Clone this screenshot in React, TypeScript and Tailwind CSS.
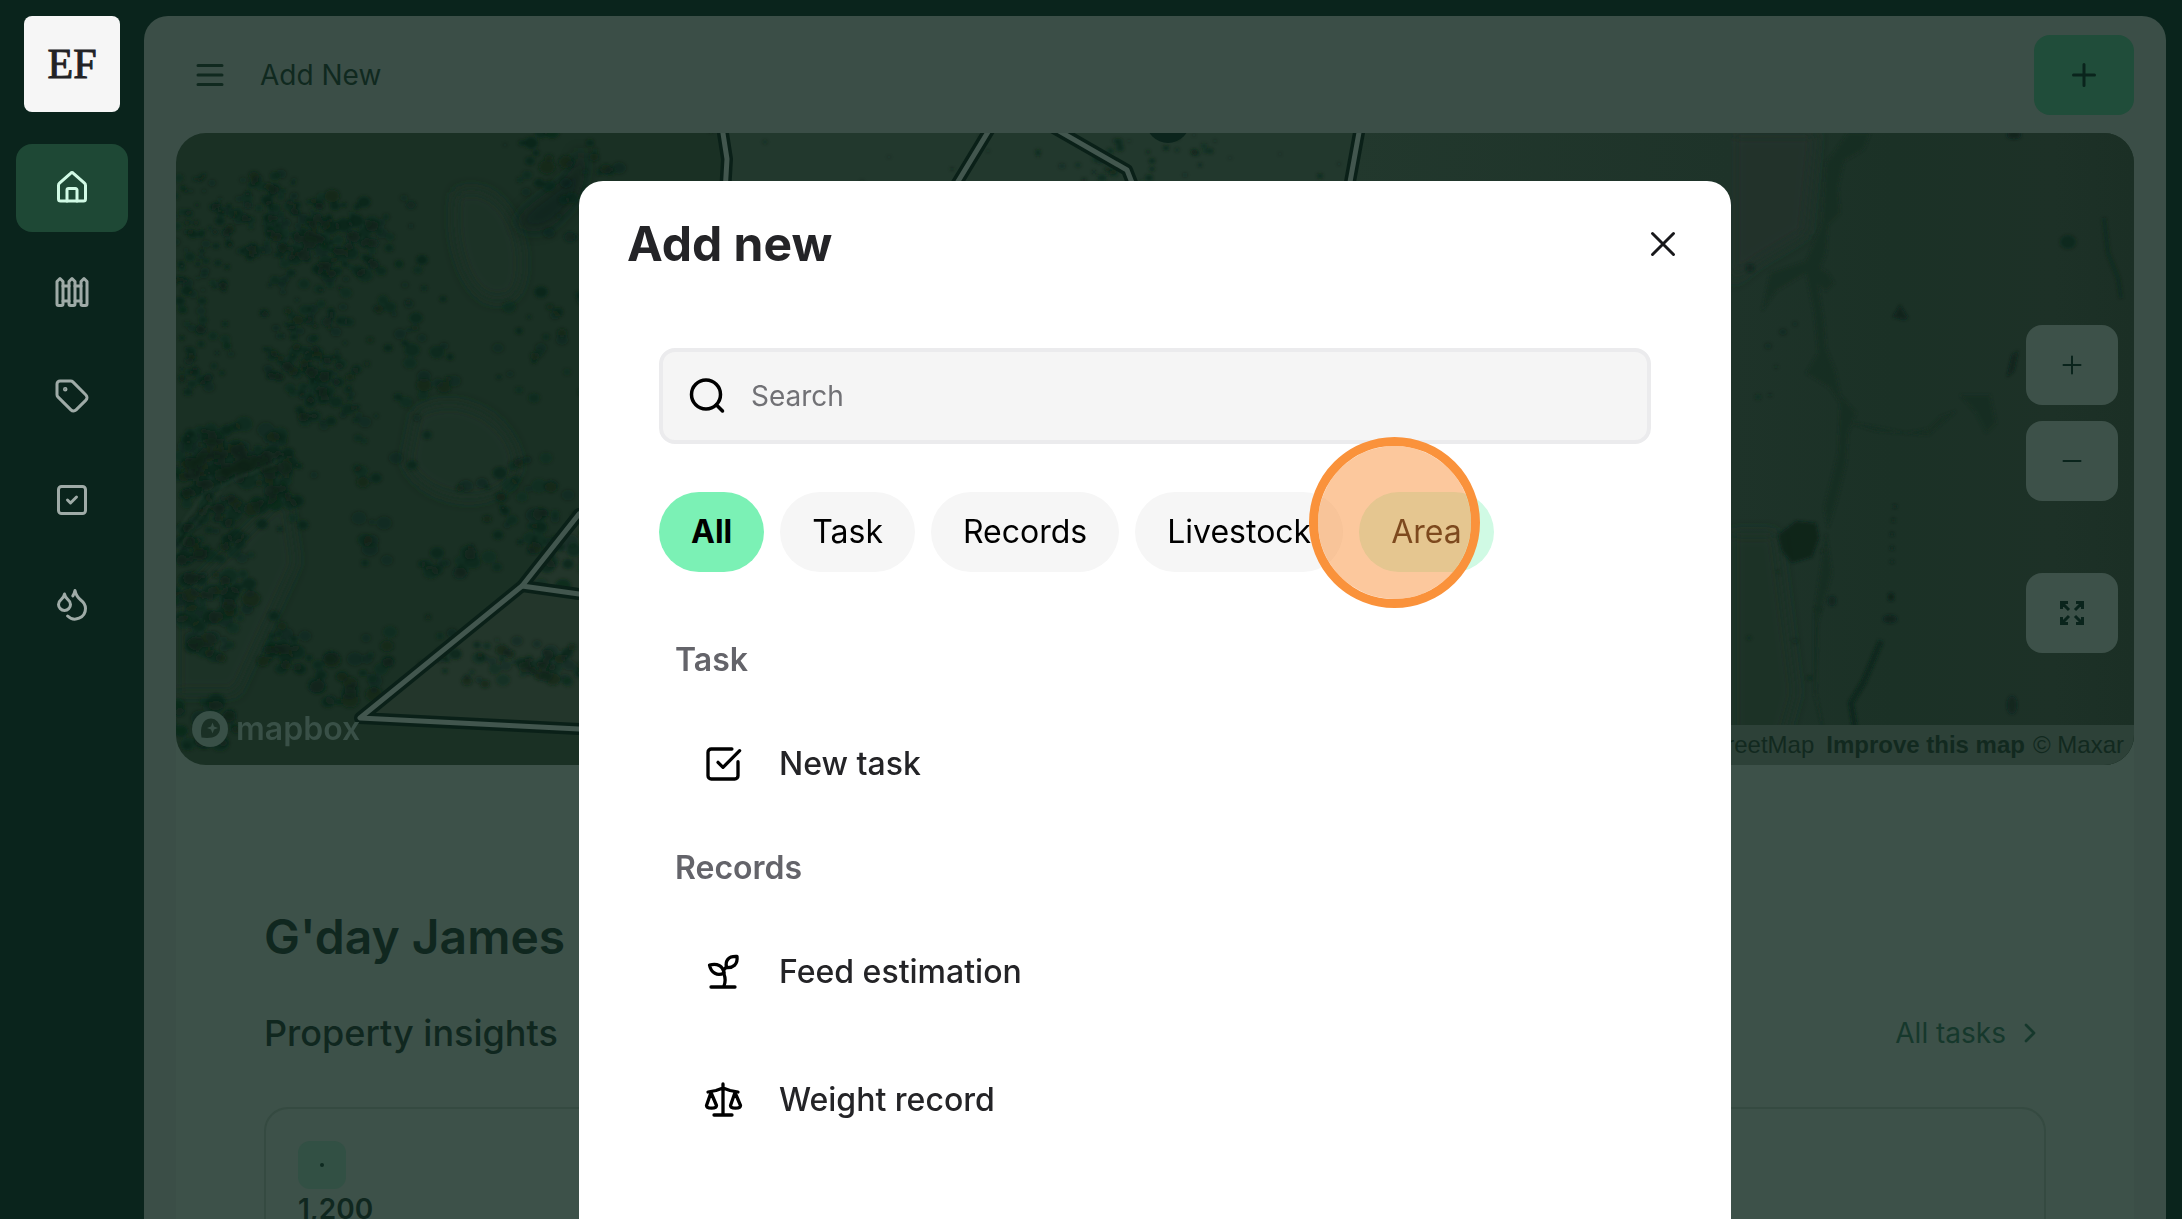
import type { ReactNode } from "react";
import { ChevronRight, Droplets, Fence, SquareCheck, SquareCheckBig, Tag } from "lucide-react";

const nextRandom = (seed: number) => {
  let s = seed;
  return () => {
    s = (s * 16807) % 2147483647;
    return s / 2147483647;
  };
};

// Wooded areas of the aerial view: centre x, centre y, spread x, spread y, trees, crown size
const woods: [number, number, number, number, number, number][] = [
  [20, 90, 35, 60, 40, 4],
  [95, 85, 60, 45, 120, 5],
  [170, 105, 60, 45, 60, 7],
  [25, 180, 35, 90, 70, 5],
  [130, 190, 45, 90, 110, 5],
  [150, 260, 40, 40, 50, 6],
  [65, 320, 55, 30, 60, 8],
  [25, 350, 30, 60, 60, 7],
  [95, 360, 50, 45, 40, 7],
  [40, 450, 45, 80, 90, 8],
  [110, 510, 30, 30, 26, 7],
  [165, 545, 45, 25, 26, 8],
  [225, 160, 50, 100, 30, 6],
  [245, 235, 40, 50, 18, 7],
  [210, 310, 50, 50, 12, 6],
  [200, 405, 40, 30, 8, 7],
  [285, 430, 40, 18, 16, 7],
  [330, 360, 50, 60, 26, 7],
  [375, 410, 40, 60, 34, 7],
  [385, 30, 60, 40, 22, 7],
  [395, 110, 60, 60, 14, 6],
  [370, 215, 60, 60, 24, 6],
  [320, 530, 60, 28, 36, 6],
  [385, 535, 40, 22, 30, 7],
  [230, 520, 60, 40, 14, 6],
  [25, 590, 40, 25, 26, 8],
  [760, 20, 500, 40, 30, 3],
  [960, 25, 80, 25, 30, 4],
  [1600, 200, 40, 80, 6, 3],
  [1620, 480, 60, 90, 8, 3],
];

const trees = (() => {
  const rand = nextRandom(7321);
  return woods.flatMap(([cx, cy, sx, sy, count, size]) =>
    Array.from({ length: count }, () => {
      const a = rand() * Math.PI * 2;
      const d = Math.pow(rand(), 0.6);
      const r = size * (0.4 + rand() * 0.8);
      return {
        x: Math.round(cx + Math.cos(a) * d * sx),
        y: Math.round(cy + Math.sin(a) * d * sy),
        r: Math.round(r * 10) / 10,
        o: Math.round((0.25 + rand() * 0.4) * 100) / 100,
      };
    }),
  );
})();

const fences = [
  "M403 381 L346 453 L184 585 L403 596",
  "M346 453 L403 461",
  "M546 -6 L551 26 L549 60",
  "M815 -6 L775 60",
  "M876 -6 L951 37 L960 60",
  "M1184 -6 L1172 60",
];

function AerialMap() {
  return (
    <svg
      className="absolute inset-0 h-full w-full"
      viewBox="0 0 1958 632"
      preserveAspectRatio="xMidYMid slice"
      aria-hidden="true"
    >
      <defs>
        <filter id="soft" x="-20%" y="-20%" width="140%" height="140%">
          <feGaussianBlur stdDeviation="1.4" />
        </filter>
        <filter id="shade" x="-50%" y="-50%" width="200%" height="200%">
          <feGaussianBlur stdDeviation="7" />
        </filter>
        <linearGradient id="pasture" x1="0" x2="1">
          <stop offset="0.62" stopColor="#22382d" />
          <stop offset="1" stopColor="#1e3329" />
        </linearGradient>
        <linearGradient id="east" x1="0" x2="1">
          <stop offset="0" stopColor="#1e3329" />
          <stop offset="0.4" stopColor="#1b3126" />
          <stop offset="0.8" stopColor="#1d3127" />
          <stop offset="1" stopColor="#1b2f25" />
        </linearGradient>
      </defs>
      <rect width="1958" height="632" fill="#1a3024" />
      <rect x="1555" width="403" height="632" fill="url(#east)" />
      <g filter="url(#shade)">
        <path d="M240 280 C290 250 350 300 340 340 C320 380 250 370 230 330Z" fill="#1d3327" />
        <path d="M280 60 C330 40 360 120 340 160 C300 190 270 120 280 60Z" fill="#1c3227" />
        <path d="M0 470 L110 360 L120 430 L60 560 L0 560Z" fill="#1e3328" />
        <path d="M1555 0 H1640 L1630 100 L1580 130 L1555 150Z" fill="#20322a" />
        <path d="M1555 400 H1600 L1620 560 L1600 632 H1555Z" fill="#1e3128" />
      </g>
      <path d="M546 0 H1555 V60 H549 L551 26Z" fill="url(#pasture)" />
      <path d="M403 381 L346 453 L184 585 L403 596Z" fill="#23362b" />
      <path
        d="M400 20 C400 50 360 60 342 85 C335 100 370 105 385 85 C400 70 410 60 410 20Z"
        fill="#0b231a"
        opacity="0.7"
        filter="url(#shade)"
      />
      <g fill="#0b2318" filter="url(#soft)">
        {trees.map((t, i) => (
          <ellipse key={i} cx={t.x} cy={t.y} rx={t.r} ry={t.r * 0.85} opacity={t.o} />
        ))}
      </g>
      <g fill="none" stroke="#2b4036" strokeWidth="2" opacity="0.5" filter="url(#soft)">
        <path d="M0 400 L28 360 L62 345 L100 330" />
        <path d="M0 420 L20 390 L50 350" />
      </g>
      {/* creek lines and dams on the eastern side */}
      <g fill="#142d21" filter="url(#soft)" opacity="0.8">
        <path d="M1694 0 L1688 16 L1668 28 L1662 55 L1664 80 L1652 92 L1650 120 L1644 135 L1652 140 L1658 150 L1650 158 L1642 152 L1648 190 L1650 215 L1660 240 L1664 262 L1680 280 L1672 300 L1670 330 L1660 370 L1652 395 L1648 375 L1662 320 L1664 270 L1654 255 L1630 240 L1642 220 L1638 180 L1630 140 L1600 158 L1586 178 L1594 140 L1630 128 L1646 90 L1650 30 L1672 0Z" />
        <path d="M1668 288 L1700 294 L1730 300 L1752 296 L1764 284 L1780 278 L1752 302 L1700 298Z" />
        <path d="M1784 262 L1814 262 L1820 290 L1810 300 L1800 280Z" />
        <path d="M1650 400 L1656 440 L1642 490 L1640 560 L1650 610 L1638 560 L1638 480Z" />
      </g>
      <g fill="#0a2119" filter="url(#soft)">
        <path d="M1602 402 L1620 388 L1640 390 L1643 405 L1636 424 L1616 430 L1606 418Z" opacity="0.9" />
        <path d="M1724 172 L1732 185 L1728 187 L1717 184Z" opacity="0.8" />
        <path d="M1836 222 L1842 218 L1838 238 L1831 244Z" opacity="0.8" />
        <ellipse cx="1892" cy="109" rx="8" ry="7" opacity="0.5" />
        <ellipse cx="1574" cy="135" rx="4" ry="4" opacity="0.7" />
        <ellipse cx="1836" cy="572" rx="5" ry="9" opacity="0.7" />
        <ellipse cx="1715" cy="464" rx="3" ry="4" />
        <ellipse cx="1656" cy="468" rx="4" ry="5" opacity="0.7" />
        <ellipse cx="1714" cy="486" rx="7" ry="4" opacity="0.8" />
        <ellipse cx="1838" cy="2" rx="7" ry="4" opacity="0.8" />
      </g>
      <g fill="none" stroke="#0d251b" filter="url(#soft)">
        <path d="M1705 508 L1688 548 L1675 570 L1679 595 L1690 632" strokeWidth="5" />
        <path d="M1928 85 L1932 120 L1942 145 L1945 165" strokeWidth="4" opacity="0.4" />
        <path d="M1719 372 L1716 400 L1716 430" strokeWidth="3" strokeDasharray="3 11" />
      </g>
      <circle cx="992" cy="-12" r="22" fill="#0b241c" />
      <g fill="none" strokeLinejoin="round" strokeLinecap="round">
        {fences.map((d) => (
          <path key={d} d={d} stroke="#0a2018" strokeWidth="12" />
        ))}
        {fences.map((d) => (
          <path key={d} d={d} stroke="#42564e" strokeWidth="5" />
        ))}
      </g>
    </svg>
  );
}

function Glyph({ children, width = 3 }: { children: ReactNode; width?: number }) {
  return (
    <svg
      className="h-10 w-10"
      viewBox="0 0 40 40"
      fill="none"
      stroke="currentColor"
      strokeWidth={width}
      strokeLinecap="round"
      strokeLinejoin="round"
      aria-hidden="true"
    >
      {children}
    </svg>
  );
}

const HomeIcon = () => (
  <Glyph>
    <path d="M6.500 17.500a3 3 0 0 1 1-2.300L18.600 5.300a2 2 0 0 1 2.800 0l11.100 9.900a3 3 0 0 1 1 2.300V31a2 2 0 0 1-2 2h-23a2 2 0 0 1-2-2Z" />
    <path d="M15 33V22a1.500 1.500 0 0 1 1.500-1.500h7A1.500 1.500 0 0 1 25 22v11" />
  </Glyph>
);

const MenuIcon = () => (
  <Glyph>
    <path d="M8 10.500h24M8 20h24M8 29.500h24" />
  </Glyph>
);

const PlusIcon = () => (
  <Glyph>
    <path d="M20 9.500v21M9.500 20h21" />
  </Glyph>
);

const SmallPlusIcon = () => (
  <Glyph width={2}>
    <path d="M20 11.500v17M11.500 20h17" />
  </Glyph>
);

const MinusIcon = () => (
  <Glyph width={2}>
    <path d="M11.500 20h17" />
  </Glyph>
);

const ExpandIcon = () => (
  <Glyph>
    <g strokeLinecap="butt" strokeLinejoin="miter">
      <path d="M16 9.500H9.500V16M9.500 9.500l7.500 7.500M24 9.500h6.500V16M30.500 9.500 23 17M16 30.500H9.500V24M9.500 30.500 17 23M24 30.500h6.500V24M30.500 30.500 23 23" />
    </g>
  </Glyph>
);

const CloseIcon = () => (
  <Glyph>
    <path d="M9.500 9.500l21 21M30.500 9.500l-21 21" />
  </Glyph>
);

const SearchIcon = () => (
  <Glyph width={3.5}>
    <circle cx="19" cy="18.500" r="14.500" />
    <path d="M29.500 29l6 6" />
  </Glyph>
);

const SproutIcon = () => (
  <Glyph width={3.3}>
    <path d="M8 35h24" />
    <path d="M21 34c1.500-4 1.500-8 0-12-1-4 0-5.500 3-7" />
    <path d="M23.500 15.500C22 9 25 4 34 4.500c1 8-4 11.500-10.500 11Z" />
    <path d="M21 21C20 13.500 14 11 6.500 13c1.500 8 8 11.500 14.500 8Z" />
  </Glyph>
);

const ScaleIcon = () => (
  <Glyph width={3.3}>
    <path d="M20 4v31M11 35h18M5 12l8-1.500 7-2.500 7 2.500 8 1.500" />
    <path d="M8 12.500 3.500 25.500c0 3.500 10 3.500 10 0ZM32 12.500l-4.500 13c0 3.500 10 3.500 10 0Z" />
  </Glyph>
);

const navItems: { label: string; icon: ReactNode; active?: boolean }[] = [
  { label: "Home", icon: <HomeIcon />, active: true },
  { label: "Paddocks", icon: <Fence size={36} /> },
  { label: "Livestock", icon: <Tag size={36} /> },
  { label: "Tasks", icon: <SquareCheck size={36} /> },
  { label: "Water", icon: <Droplets size={36} /> },
];

function Sidebar() {
  return (
    <aside className="flex w-36 shrink-0 flex-col items-center pt-4">
      <a
        href="#"
        className="flex h-24 w-24 items-center justify-center rounded-lg bg-[#f6f6f6] font-['Liberation_Serif',serif] text-[42px] leading-none text-[#222225] [-webkit-text-stroke:1px_#222225]"
      >
        EF
      </a>
      <nav className="mt-8 flex w-full flex-col gap-4 px-4">
        {navItems.map((item) => (
          <a
            key={item.label}
            href="#"
            aria-label={item.label}
            className={
              item.active
                ? "flex h-22 items-center justify-center rounded-2xl bg-[#1e4835] text-[#d1fae5]"
                : "flex h-22 items-center justify-center rounded-2xl text-[#9faba7]"
            }
          >
            {item.icon}
          </a>
        ))}
      </nav>
    </aside>
  );
}

const mapButton =
  "flex h-20 w-23 items-center justify-center rounded-2xl bg-[#3d5149] text-[#0a241c]";

function MapCard() {
  return (
    <section aria-label="Property map" className="relative h-[632px] overflow-hidden rounded-[30px]">
      <AerialMap />
      <div className="absolute top-48 right-4 flex flex-col">
        <button type="button" aria-label="Zoom in" className={mapButton}>
          <SmallPlusIcon />
        </button>
        <button type="button" aria-label="Zoom out" className={`${mapButton} mt-4`}>
          <MinusIcon />
        </button>
        <button type="button" aria-label="Full screen" className={`${mapButton} mt-18`}>
          <ExpandIcon />
        </button>
      </div>
      <a
        href="#"
        aria-label="Mapbox"
        className="absolute bottom-3.5 left-4 flex items-center gap-2 text-[32px] leading-[44px] font-semibold text-[#395047]"
      >
        <svg className="h-9 w-9" viewBox="0 0 36 36" aria-hidden="true">
          <circle cx="18" cy="18" r="18" fill="#395047" />
          <path d="M9.500 26.500C8 17 10 8 19 7.500a9.500 9.500 0 0 1 9 9.500c0 9-9 11-18.500 9.500Z" fill="#1a3025" />
          <path d="M20.500 11.500l1.500 4 4 1.500-4 1.500-1.500 4-1.500-4-4-1.500 4-1.500Z" fill="#395047" />
        </svg>
        mapbox
      </a>
      <p className="absolute right-0 bottom-0 flex h-10 items-center gap-2 bg-[#2d4138] px-2.5 font-['Liberation_Sans',sans-serif] text-2xl whitespace-nowrap text-[#12291f]">
        <a href="#">© Mapbox</a>
        <a href="#">© OpenStreetMap</a>
        <a href="#" className="ml-1 font-bold">
          Improve this map
        </a>
        <span>© Maxar</span>
      </p>
    </section>
  );
}

function Dashboard() {
  return (
    <div className="flex flex-1 flex-col bg-[#3d5149] px-22 pt-[142px] text-[#10271f]">
      <h1 className="text-5xl leading-[60px] font-semibold">G'day James</h1>
      <div className="mt-9 flex items-center justify-between">
        <h2 className="text-4xl leading-[60px] font-medium">Property insights</h2>
        <a href="#" className="flex items-center gap-2 text-[28px] text-[#16382c]">
          All tasks
          <ChevronRight size={32} strokeWidth={2} />
        </a>
      </div>
      <div className="mt-11 flex-1 rounded-t-3xl border-2 border-b-0 border-[#354a41] px-8 pt-8">
        <div className="flex h-12 w-12 items-center justify-center rounded-xl bg-[#325044]">
          <span className="h-1 w-1 rounded-full bg-[#0e2a20]" />
        </div>
        <p className="text-[28px] leading-[40px] font-semibold">1,200</p>
      </div>
    </div>
  );
}

const chips: { label: string; className: string }[] = [
  { label: "All", className: "bg-[#7bf1b5] font-bold" },
  { label: "Task", className: "bg-[#f6f6f6]" },
  { label: "Records", className: "bg-[#f6f6f6]" },
  { label: "Livestock", className: "bg-[#f6f6f6]" },
  { label: "Area", className: "bg-[#d0fae4]" },
];

const groups: { title: string; items: { label: string; icon: ReactNode }[] }[] = [
  { title: "Task", items: [{ label: "New task", icon: <SquareCheckBig size={40} /> }] },
  {
    title: "Records",
    items: [
      { label: "Feed estimation", icon: <SproutIcon /> },
      { label: "Weight record", icon: <ScaleIcon /> },
    ],
  },
];

function AddNewDialog() {
  return (
    <div
      role="dialog"
      aria-labelledby="dialog-title"
      className="h-full w-full max-w-6xl overflow-hidden rounded-t-3xl bg-white"
    >
      <header className="flex h-[126px] items-center justify-between px-12">
        <h2 id="dialog-title" className="text-5xl font-bold text-[#242427]">
          Add new
        </h2>
        <button type="button" aria-label="Close" className="text-[#18181b]">
          <CloseIcon />
        </button>
      </header>
      <div className="px-20 pt-[41px]">
        <label className="flex h-24 items-center gap-6 rounded-2xl border-4 border-[#ebebed] bg-[#f5f5f5] px-6">
          <SearchIcon />
          <input
            type="search"
            aria-label="Search"
            placeholder="Search"
            className="min-w-0 flex-1 bg-transparent text-[28px] outline-none placeholder:text-[#717175]"
          />
        </label>
        <div className="mt-12 flex gap-4">
          {chips.map((chip, i) => (
            <div key={chip.label} className="relative">
              <button type="button" className={`h-20 rounded-full px-8 text-[32px] text-black ${chip.className}`}>
                {chip.label}
              </button>
              {i === chips.length - 1 && (
                <span className="pointer-events-none absolute -top-[55px] -left-[50px] h-[171px] w-[171px] rounded-full border-9 border-[#fa923b] bg-[#fa923b]/50 bg-clip-padding" />
              )}
            </div>
          ))}
        </div>
        <div className="mt-12">
          {groups.map((group) => (
            <section key={group.title}>
              <h3 className="flex h-20 items-center px-4 text-[32px] font-semibold text-[#64646a]">{group.title}</h3>
              <ul>
                {group.items.map((item) => (
                  <li key={item.label}>
                    <button
                      type="button"
                      className="flex h-32 w-full items-center gap-9 px-11 text-left text-[32px] font-medium text-[#242427]"
                    >
                      <span className="text-black">{item.icon}</span>
                      {item.label}
                    </button>
                  </li>
                ))}
              </ul>
            </section>
          ))}
        </div>
      </div>
    </div>
  );
}

export default function App() {
  return (
    <div className="flex h-screen overflow-hidden bg-[#0a241c] pr-4 font-['Inter',sans-serif]">
      <Sidebar />
      <main className="relative mt-4 flex min-w-0 flex-1 flex-col overflow-hidden rounded-t-3xl bg-[#3b4e47] px-8">
        <header className="flex h-[117px] shrink-0 items-center justify-between">
          <div className="flex items-center gap-[30px] pl-3.5 text-[28px] text-[#10291f]">
            <button type="button" aria-label="Toggle menu">
              <MenuIcon />
            </button>
            <span>Add New</span>
          </div>
          <button
            type="button"
            aria-label="Add"
            className="flex h-20 w-25 items-center justify-center rounded-2xl bg-[#204d3a] text-[#0a241c]"
          >
            <PlusIcon />
          </button>
        </header>
        <div className="flex flex-1 flex-col bg-[linear-gradient(#3b4e47_600px,#3d5149_600px)]">
          <MapCard />
          <Dashboard />
        </div>
        <div className="absolute inset-0 flex justify-center pt-[165px]">
          <AddNewDialog />
        </div>
      </main>
    </div>
  );
}
